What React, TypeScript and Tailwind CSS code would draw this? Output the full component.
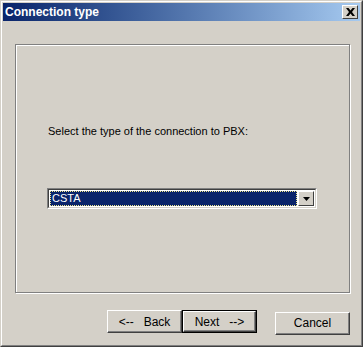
import React from "react";

const font = { fontFamily: '"Liberation Sans", Arial, sans-serif' };

function Button({ label, isDefault }: { label: string; isDefault?: boolean }) {
  return (
    <button
      className={`w-[75px] h-[23px] bg-[#d4d0c8] text-[12px] text-black ${
        isDefault ? "border border-black" : ""
      }`}
    >
      <span className="flex w-full h-full items-center justify-center whitespace-pre border border-t-white border-l-white border-r-[#404040] border-b-[#404040] shadow-[inset_-1px_-1px_0_#808080]">
        {label}
      </span>
    </button>
  );
}

export default function App() {
  return (
    <div
      className="w-[363px] h-[347px] bg-[#d4d0c8] border border-t-[#d4d0c8] border-l-[#d4d0c8] border-r-[#404040] border-b-[#404040]"
      style={font}
    >
      <div className="w-full h-full border border-t-white border-l-white border-r-[#808080] border-b-[#808080] p-px flex flex-col">
        <div className="h-[18px] flex items-center justify-between pl-[2px] pr-[2px] bg-gradient-to-r from-[#0a246a] to-[#a6caf0]">
          <span className="text-white font-bold text-[12px] leading-none">Connection type</span>
          <span className="w-[16px] h-[14px] bg-[#d4d0c8] border border-t-white border-l-white border-r-[#404040] border-b-[#404040] flex items-center justify-center">
            <svg width="9" height="8" viewBox="0 0 9 8">
              <path d="M0 0h2.5l2 2.5 2-2.5H9L6 4l3 4H6.5l-2-2.5-2 2.5H0l3-4z" fill="#000" />
            </svg>
          </span>
        </div>

        <div className="ml-[12px] mt-[23px] w-[335px] h-[249px] border border-[#808080] shadow-[inset_1px_1px_0_#fff,1px_1px_0_#fff] pl-[32px] pt-[80px]">
          <p className="text-[11px] leading-[13px] text-black">Select the type of the connection to PBX:</p>
          <div className="mt-[50px] -ml-[1px] w-[270px] h-[21px] flex border border-t-[#808080] border-l-[#808080] border-r-white border-b-white">
            <div className="flex-1 flex border border-t-[#404040] border-l-[#404040] border-r-[#d4d0c8] border-b-[#d4d0c8] bg-white p-px">
              <div className="flex-1 bg-[#0a246a] outline outline-1 outline-dotted outline-[#f0e68c] -outline-offset-1 text-white text-[11px] leading-none flex items-center pl-[2px]">
                CSTA
              </div>
              <div className="w-[16px] ml-px bg-[#d4d0c8] border border-t-white border-l-white border-r-[#404040] border-b-[#404040] flex items-center justify-center">
                <svg width="7" height="4" viewBox="0 0 7 4">
                  <path d="M0 0h7L3.5 4z" fill="#000" />
                </svg>
              </div>
            </div>
          </div>
        </div>

        <div className="flex mt-[17px] ml-[104px]">
          <Button label="<--   Back" />
          <Button label="Next   -->" isDefault />
          <div className="ml-[18px]">
            <Button label="Cancel" />
          </div>
        </div>
      </div>
    </div>
  );
}
